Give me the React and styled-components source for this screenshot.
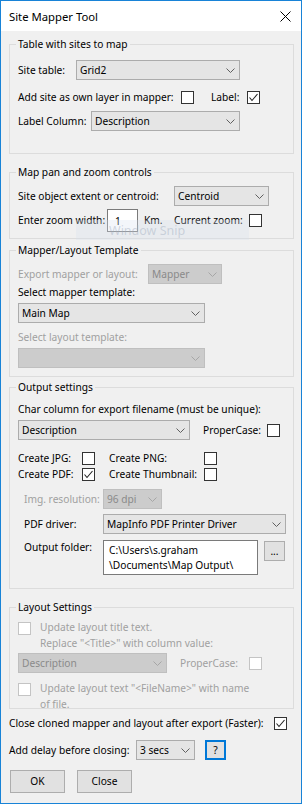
import React from "react";
import styled, { createGlobalStyle } from "styled-components";

const GlobalStyle = createGlobalStyle`
  html, body {
    margin: 0;
    padding: 0;
    background: #fff;
  }
  body {
    font-family: "Noto Sans", "Open Sans", sans-serif;
    font-size: 10.2px;
    color: #000;
  }
`;

const Window = styled.div`
  position: relative;
  width: 302px;
  height: 804px;
  box-sizing: border-box;
  border: 1px solid #1883d7;
  background: #f0f0f0;
  display: flex;
  flex-direction: column;
  overflow: hidden;
`;

const TitleBar = styled.div`
  flex: none;
  height: 30px;
  background: #fff;
  display: flex;
  align-items: center;
  justify-content: space-between;
  padding: 0 10px 0 8px;
  font-size: 11.3px;
`;

const Body = styled.div`
  flex: 1;
  padding: 0 7px 0 8px;
  line-height: 15px;
`;

// group box drawn like a windows forms GroupBox
const Group = styled.fieldset`
  margin: ${(p) => p.$mt}px 0 0 0;
  padding: 0 8px ${(p) => p.$pb}px 8px;
  border: 1px solid #dcdcdc;
  min-width: 0;
`;

const Legend = styled.legend`
  padding: 0 2px;
  margin-left: -2px;
  line-height: 15px;
`;

const Row = styled.div`
  display: flex;
  align-items: ${(p) => (p.$top ? "flex-start" : "center")};
  height: ${(p) => p.$h}px;
  margin-top: ${(p) => p.$mt}px;
  padding-left: ${(p) => p.$indent || 0}px;
`;

const Label = styled.span`
  flex: none;
  width: ${(p) => (p.$w ? `${p.$w}px` : "auto")};
  margin-left: ${(p) => p.$ml || 0}px;
  color: ${(p) => (p.$disabled ? "#a0a0a0" : "#000")};
  white-space: nowrap;
`;

const Lines = styled.div`
  margin-left: ${(p) => p.$ml || 0}px;
  line-height: 16px;
  color: ${(p) => (p.$disabled ? "#a0a0a0" : "#000")};
  white-space: nowrap;
`;

const Combo = styled.div`
  flex: none;
  box-sizing: border-box;
  width: ${(p) => p.$w}px;
  height: 20px;
  border: 1px solid ${(p) => (p.$disabled ? "#bfbfbf" : "#acacac")};
  background: ${(p) => (p.$disabled ? "#cccccc" : "#e5e5e5")};
  color: ${(p) => (p.$disabled ? "#8a8a8a" : "#000")};
  display: flex;
  align-items: center;
  justify-content: space-between;
  padding: 0 4px 0 3px;
  white-space: nowrap;
`;

const Box = styled.span`
  flex: none;
  box-sizing: border-box;
  width: 13px;
  height: 13px;
  margin-top: ${(p) => p.$mt || 0}px;
  border: 1px solid ${(p) => (p.$disabled ? "#c4c4c4" : "#333")};
  background: #fff;
  display: flex;
  align-items: center;
  justify-content: center;
`;

const TextBox = styled.div`
  flex: none;
  box-sizing: border-box;
  width: ${(p) => p.$w}px;
  height: ${(p) => p.$h}px;
  border: 1px solid #7a7a7a;
  background: #fff;
  padding: ${(p) => p.$pad};
  white-space: nowrap;
`;

const Button = styled.button`
  flex: none;
  box-sizing: border-box;
  width: ${(p) => p.$w}px;
  height: ${(p) => p.$h}px;
  margin: ${(p) => p.$mt || 0}px 0 0 ${(p) => p.$ml || 0}px;
  padding: 0;
  border: ${(p) => (p.$focus ? "2px solid #0078d7" : "1px solid #adadad")};
  background: #e1e1e1;
  font: inherit;
  color: #000;
  display: flex;
  align-items: center;
  justify-content: center;
`;

// faint "Window Snip" tooltip left over in the screenshot
const SnipHint = styled.div`
  position: absolute;
  left: 75px;
  top: 219px;
  width: 173px;
  height: 20px;
  background: rgba(214, 226, 240, 0.3);
  color: rgba(160, 172, 190, 0.45);
  font-size: 12.5px;
  line-height: 22px;
  padding-left: 33px;
  box-sizing: border-box;
  pointer-events: none;
`;

const Chevron = ({ disabled }) => (
  <svg width="9" height="5" viewBox="0 0 9 5">
    <polyline
      points="0.5,0.5 4.5,4.5 8.5,0.5"
      fill="none"
      stroke={disabled ? "#a6a6a6" : "#606060"}
      strokeWidth="1"
    />
  </svg>
);

const Select = ({ w, value, disabled }) => (
  <Combo $w={w} $disabled={disabled}>
    <span>{value}</span>
    <Chevron disabled={disabled} />
  </Combo>
);

const CheckBox = ({ checked, disabled, mt }) => (
  <Box $disabled={disabled} $mt={mt}>
    {checked && (
      <svg width="11" height="11" viewBox="0 0 11 11">
        <polyline
          points="1.5,5.5 4,8.5 9.5,2"
          fill="none"
          stroke="#222"
          strokeWidth="1.1"
        />
      </svg>
    )}
  </Box>
);

const CloseIcon = () => (
  <svg width="11" height="11" viewBox="0 0 11 11">
    <path d="M0.5 0.5 L10.5 10.5 M10.5 0.5 L0.5 10.5" stroke="#000" strokeWidth="1" />
  </svg>
);

export default function App() {
  return (
    <>
      <GlobalStyle />
      <Window>
        <TitleBar>
          <span>Site Mapper Tool</span>
          <CloseIcon />
        </TitleBar>
        <Body>
          <Group $mt={6} $pb={22}>
            <Legend>Table with sites to map</Legend>
            <Row $mt={8} $h={20}>
              <Label $w={58}>Site table:</Label>
              <Select w={164} value="Grid2" />
            </Row>
            <Row $mt={8} $h={18}>
              <Label $w={163}>Add site as own layer in mapper:</Label>
              <CheckBox />
              <Label $ml={17} $w={36}>Label:</Label>
              <CheckBox checked />
            </Row>
            <Row $mt={5} $h={20}>
              <Label $w={73}>Label Column:</Label>
              <Select w={149} value="Description" />
            </Row>
          </Group>

          <Group $mt={11} $pb={6}>
            <Legend>Map pan and zoom controls</Legend>
            <Row $mt={6} $h={20}>
              <Label $w={156}>Site object extent or centroid:</Label>
              <Select w={95} value="Centroid" />
            </Row>
            <Row $mt={3} $h={23}>
              <Label $w={89}>Enter zoom width:</Label>
              <TextBox $w={31} $h={23} $pad="4px 0 0 7px">1</TextBox>
              <Label $ml={6} $w={30}>Km.</Label>
              <Label $w={75}>Current zoom:</Label>
              <CheckBox />
            </Row>
          </Group>

          <Group $mt={4} $pb={8}>
            <Legend>Mapper/Layout Template</Legend>
            <Row $mt={6} $h={20}>
              <Label $w={130} $disabled>Export mapper or layout:</Label>
              <Select w={74} value="Mapper" disabled />
            </Row>
            <Row $mt={1} $h={15}>
              <Label>Select mapper template:</Label>
            </Row>
            <Row $mt={3} $h={20}>
              <Select w={187} value="Main Map" />
            </Row>
            <Row $mt={7} $h={15}>
              <Label $disabled>Select layout template:</Label>
            </Row>
            <Row $mt={3} $h={20}>
              <Select w={187} value="" disabled />
            </Row>
          </Group>

          <Group $mt={3} $pb={13}>
            <Legend>Output settings</Legend>
            <Row $mt={7} $h={15}>
              <Label>Char column for export filename (must be unique):</Label>
            </Row>
            <Row $mt={3} $h={20}>
              <Select w={172} value="Description" />
              <Label $ml={13} $w={64}>ProperCase:</Label>
              <CheckBox />
            </Row>
            <Row $mt={11} $h={15}>
              <Label $w={64}>Create JPG:</Label>
              <CheckBox />
              <Label $ml={14} $w={95}>Create PNG:</Label>
              <CheckBox />
            </Row>
            <Row $mt={1} $h={15}>
              <Label $w={64}>Create PDF:</Label>
              <CheckBox checked />
              <Label $ml={14} $w={95}>Create Thumbnail:</Label>
              <CheckBox />
            </Row>
            <Row $mt={7} $h={20} $indent={6}>
              <Label $w={79} $disabled>Img. resolution:</Label>
              <Select w={59} value="96 dpi" disabled />
            </Row>
            <Row $mt={5} $h={20} $indent={6}>
              <Label $w={79}>PDF driver:</Label>
              <Select w={183} value="MapInfo PDF Printer Driver" />
            </Row>
            <Row $mt={6} $h={35} $indent={6} $top>
              <Label $w={79}>Output folder:</Label>
              <TextBox $w={155} $h={35} $pad="2px 0 0 5px">
                {"C:\\Users\\s.graham"}
                <br />
                {"\\Documents\\Map Output\\"}
              </TextBox>
              <Button $w={21} $h={20} $ml={6} $mt={1}>...</Button>
            </Row>
          </Group>

          <Group $mt={11} $pb={0}>
            <Legend>Layout Settings</Legend>
            <Row $mt={4} $h={32} $top>
              <CheckBox disabled mt={3} />
              <Lines $ml={9} $disabled>
                Update layout title text.
                <br />
                {'Replace "<Title>" with column value:'}
              </Lines>
            </Row>
            <Row $mt={2} $h={20}>
              <Select w={149} value="Description" disabled />
              <Label $ml={13} $w={69} $disabled>ProperCase:</Label>
              <CheckBox disabled />
            </Row>
            <Row $mt={7} $h={28} $top>
              <CheckBox disabled mt={3} />
              <Lines $ml={9} $disabled>
                {'Update layout text "<FileName>" with name'}
                <br />
                of file.
              </Lines>
            </Row>
          </Group>

          <Row $mt={7} $h={15}>
            <Label $w={265}>Close cloned mapper and layout after export (Faster):</Label>
            <CheckBox checked />
          </Row>
          <Row $mt={9} $h={20}>
            <Label $w={127}>Add delay before closing:</Label>
            <Select w={59} value="3 secs" />
            <Button $w={21} $h={20} $ml={10} $focus>?</Button>
          </Row>
          <Row $mt={10} $h={23}>
            <Button $w={55} $h={23} $ml={1}>OK</Button>
            <Button $w={55} $h={23} $ml={12}>Close</Button>
          </Row>
        </Body>
        <SnipHint>Window Snip</SnipHint>
      </Window>
    </>
  );
}
